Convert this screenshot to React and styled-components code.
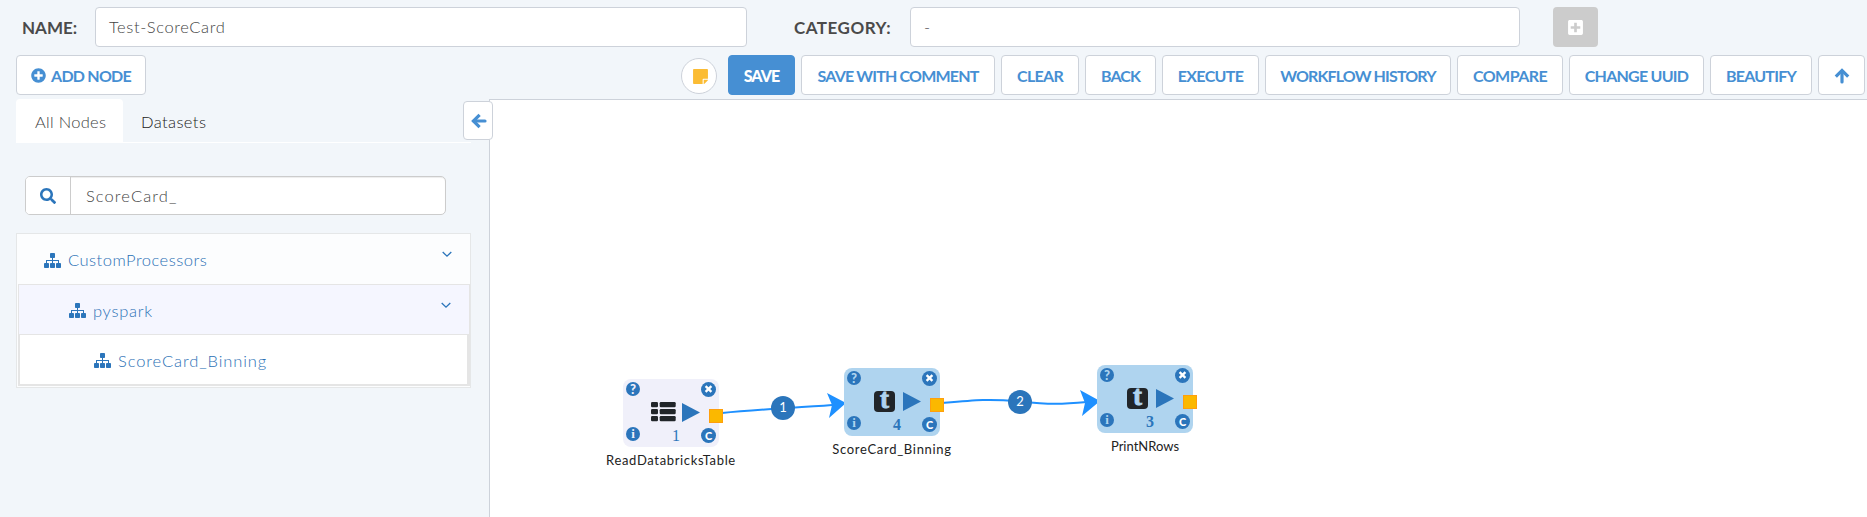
import React from 'react';
import styled, { createGlobalStyle } from 'styled-components';
import { FaPlusCircle, FaPlusSquare, FaSearch, FaStickyNote } from 'react-icons/fa';

const Global = createGlobalStyle`
  * { box-sizing: border-box; }
  body { margin: 0; font-family: Lato, "Liberation Sans", sans-serif; font-size: 16.5px; font-weight: 300; }
  svg { display: block; flex: none; }
`;

const Page = styled.div`
  height: 517px;
  display: flex;
  flex-direction: column;
  overflow: hidden;
  background: #f2f6fa;
`;
const FormRow = styled.div`
  display: flex;
  align-items: center;
  padding: 7px 0 0 22px;
`;
const Label = styled.label`
  width: ${(p) => p.$w}px;
  flex: none;
  color: #4a4a4a;
  font-size: 17px;
  font-weight: 700;
  letter-spacing: ${(p) => p.$ls || 0}px;
  white-space: nowrap;
`;
const Field = styled.div`
  width: ${(p) => p.$w}px;
  height: 40px;
  flex: none;
  display: flex;
  align-items: center;
  padding: 0 14px 1px 13px;
  margin-right: ${(p) => p.$gap}px;
  border: 1px solid #cdd2da;
  border-radius: 4px;
  background: #fff;
  color: #444;
  letter-spacing: ${(p) => p.$ls || 0}px;
`;
const AddCategory = styled.button`
  width: 45px;
  height: 40px;
  padding: 0;
  display: flex;
  align-items: center;
  justify-content: center;
  border: 0;
  border-radius: 4px;
  background: #ccc;
  color: #fff;
`;
const Toolbar = styled.div`
  height: 52px;
  display: flex;
  align-items: flex-start;
  gap: 6px;
  padding: 8px 2px 0 16px;
`;
const Spacer = styled.div`
  flex: 1;
`;
const Button = styled.button`
  width: ${(p) => p.$w}px;
  height: 40px;
  flex: none;
  display: flex;
  align-items: center;
  justify-content: center;
  gap: 5px;
  padding: 1px 0 0;
  border: 1px solid ${(p) => (p.$primary ? '#468fd3' : '#cdd2da')};
  border-radius: 4px;
  background: ${(p) => (p.$primary ? '#468fd3' : '#fff')};
  color: ${(p) => (p.$primary ? '#fff' : '#468fd3')};
  font: ${(p) => (p.$primary ? 900 : 700)} 16px Lato, "Liberation Sans", sans-serif;
  letter-spacing: ${(p) => p.$ls || 0}px;
  white-space: nowrap;
`;
const NoteButton = styled.button`
  width: 36px;
  height: 36px;
  flex: none;
  display: flex;
  align-items: center;
  justify-content: center;
  margin: 3px 5px 0 0;
  padding: 0 0 0 2px;
  border: 1px solid #cdd2da;
  border-radius: 50%;
  background: #fff;
  color: #fbbc34;
`;
const Body = styled.div`
  flex: 1;
  display: flex;
  min-height: 0;
`;
const Sidebar = styled.aside`
  position: relative;
  width: 489px;
  flex: none;
  padding-left: 16px;
`;
const Tabs = styled.div`
  width: 455px;
  height: 44px;
  display: flex;
  border-bottom: 1px solid #fff;
`;
const Tab = styled.div`
  width: ${(p) => p.$w}px;
  display: flex;
  align-items: center;
  padding: 2px 0 0 ${(p) => p.$pl}px;
  border-radius: 4px 4px 0 0;
  background: ${(p) => (p.$active ? '#fff' : 'transparent')};
  color: ${(p) => (p.$active ? '#444' : '#222')};
  letter-spacing: ${(p) => p.$ls || 0}px;
`;
const Collapse = styled.button`
  position: absolute;
  top: 2px;
  left: 463px;
  width: 30px;
  height: 39px;
  display: flex;
  align-items: center;
  justify-content: center;
  padding: 0 0 0 1px;
  border: 1px solid #cdd2da;
  border-radius: 4px;
  background: #fff;
  color: #468fd3;
  z-index: 1;
`;
const Search = styled.div`
  display: flex;
  width: 421px;
  height: 39px;
  margin: 33px 0 18px 9px;
  border: 1px solid #ccc;
  border-radius: 5px;
  background: #fff;
  box-shadow: inset 0 1px 1px rgba(0, 0, 0, 0.075);
  color: #444;
`;
const SearchIcon = styled.div`
  width: 45px;
  display: flex;
  align-items: center;
  justify-content: center;
  border-right: 1px solid #ccc;
  border-radius: 4px 0 0 4px;
  background: #fff;
  color: #2b75bb;
`;
const SearchText = styled.div`
  display: flex;
  align-items: center;
  padding: 0 0 0 15px;
  letter-spacing: ${(p) => p.$ls || 0}px;
`;
const Tree = styled.div`
  width: 455px;
  border: 1px solid #e5e7e8;
  background: #fcfdfe;
`;
const Branch = styled.div`
  margin: ${(p) => (p.$leaf ? '0' : '0 0 1px 1px')};
  border: 1px solid #e5e5e5;
  border-right-width: ${(p) => (p.$leaf ? 2 : 1)}px;
  border-bottom-width: ${(p) => (p.$leaf ? 2 : 0)}px;
  background: ${(p) => (p.$leaf ? '#fff' : '#f5f6ff')};
`;
const TreeRow = styled.div`
  height: ${(p) => p.$h || 49}px;
  display: flex;
  align-items: center;
  gap: 7px;
  padding: 2px 18px 0 ${(p) => p.$indent}px;
  color: #2b70b5;
  letter-spacing: ${(p) => p.$ls || 0}px;
`;
const Caret = styled.span`
  margin: -11px 0 0 auto;
`;
const Canvas = styled.main`
  position: relative;
  flex: 1;
  border-top: 1px solid #cdd2da;
  border-left: 1px solid #cdd2da;
  background: #fff;
`;
const Links = styled.svg`
  position: absolute;
  top: 0;
  left: 0;
`;
const Node = styled.div`
  position: absolute;
  left: ${(p) => p.$x - 490}px;
  top: ${(p) => p.$y - 100}px;
  width: 96px;
  height: 68px;
  border-radius: 8px;
  background: ${(p) => (p.$plain ? '#f0f0fa' : '#afd4ef')};
  color: #2b75bb;
`;
const Part = styled.div`
  position: absolute;
  left: ${(p) => p.$x}px;
  top: ${(p) => p.$y}px;
`;
const RoundBadge = styled.div`
  position: absolute;
  left: ${(p) => p.$x}px;
  top: ${(p) => p.$y}px;
  width: ${(p) => p.$size}px;
  height: ${(p) => p.$size}px;
  border-radius: 50%;
  background: #2b75bb;
  color: ${(p) => p.$ink || '#fff'};
  font: 900 ${(p) => p.$fs || 12}px/${(p) => p.$size}px ${(p) => p.$font || 'Lato'}, sans-serif;
  text-align: center;
`;
const Count = styled.div`
  position: absolute;
  left: 43px;
  width: 20px;
  top: 47px;
  text-align: center;
  font: ${(p) => (p.$plain ? 400 : 700)} 16px/20px "Liberation Serif", serif;
`;
const Port = styled.div`
  position: absolute;
  left: 86px;
  top: 30px;
  width: 14px;
  height: 14px;
  border: 1px solid #ff9f0d;
  background: #fbb800;
`;
const Caption = styled.div`
  position: absolute;
  top: 72px;
  left: -30px;
  width: 156px;
  text-align: center;
  color: #222;
  font-size: 13px;
  font-weight: 400;
  line-height: 18px;
  letter-spacing: ${(p) => p.$ls || 0}px;
`;
const LinkBadge = styled.div`
  position: absolute;
  left: ${(p) => p.$x - 490}px;
  top: ${(p) => p.$y - 100}px;
  width: 24px;
  height: 24px;
  border-radius: 50%;
  background: #2b75bb;
  color: #fff;
  font-size: 13px;
  font-weight: 400;
  line-height: 23px;
  text-align: center;
`;

const Sitemap = () => (
  <svg width="17" height="15" viewBox="0 0 17 15" fill="#2b75bb">
    <rect x="6" y="0" width="5" height="5" rx="0.8" />
    <path d="M8 4h1v6H8zM2 7h13v1H2zM2 7h1v3H2zM14 7h1v3h-1z" />
    <rect x="0" y="10" width="5" height="5" rx="0.8" />
    <rect x="6" y="10" width="5" height="5" rx="0.8" />
    <rect x="12" y="10" width="5" height="5" rx="0.8" />
  </svg>
);
const Chevron = () => (
  <Caret>
    <svg width="10" height="7" viewBox="0 0 10 7" fill="none" stroke="#2b75bb" strokeWidth="1.3">
      <path d="M.7 1 5 5.2 9.3 1" />
    </svg>
  </Caret>
);
const Arrow = ({ up }) => (
  <svg width="16" height="16" viewBox="0 0 16 16" fill="none" stroke="currentColor" strokeWidth="3.2">
    <g transform={up ? 'rotate(90 8 8)' : undefined}>
      <path d="M8.6 1.8 2.4 8l6.2 6.2" />
      <path d="M3 8h11" strokeLinecap="round" />
    </g>
  </svg>
);
const ListIcon = () => (
  <svg width="25" height="20" viewBox="0 0 25 20" fill="#212529">
    {[0, 7, 14].map((y) => (
      <g key={y}>
        <rect x="0" y={y} width="7" height="5.2" rx="1.2" />
        <rect x="8.7" y={y} width="16" height="5.2" rx="1.2" />
      </g>
    ))}
  </svg>
);
const LetterTile = styled.div`
  width: 21px;
  height: 21px;
  border-radius: 4px;
  background: #212529;
  color: #afd4ef;
  font: 700 27px/17px "Liberation Serif", serif;
  -webkit-text-stroke: 0.9px #afd4ef;
  text-align: center;
`;

const actions = [
  ['SAVE WITH COMMENT', 194, -0.82], ['CLEAR', 78, -0.7], ['BACK', 71, -0.95], ['EXECUTE', 97, -0.65],
  ['WORKFLOW HISTORY', 186, -0.85], ['COMPARE', 106, -0.57], ['CHANGE UUID', 135, -0.75], ['BEAUTIFY', 102, -0.75],
];

function FlowNode({ x, y, name, count, plain, ls }) {
  const face = plain ? '#f0f0fa' : '#afd4ef';
  return (
    <Node $x={x} $y={y} $plain={plain}>
      <RoundBadge $x={3} $y={3} $size={14} $ink={face} $fs={13}>?</RoundBadge>
      <RoundBadge $x={78} $y={3} $size={15}>
        <svg width="15" height="15" viewBox="0 0 15 15" stroke="#fff" strokeWidth="2.3">
          <path d="M4.6 4.1 10.4 9.9M10.4 4.1 4.6 9.9" />
        </svg>
      </RoundBadge>
      <RoundBadge $x={3} $y={48} $size={14} $ink={face} $fs={13} $font={'"Liberation Serif"'}>i</RoundBadge>
      <RoundBadge $x={78} $y={49} $size={15} $fs={11}>C</RoundBadge>
      <Part $x={plain ? 28 : 30} $y={plain ? 23 : 23}>
        {plain ? <ListIcon /> : <LetterTile>t</LetterTile>}
      </Part>
      <Part $x={59} $y={24}>
        <svg width="18" height="19" viewBox="0 0 18 19"><path d="M0 0 18 9.5 0 19z" fill="#2b75bb" /></svg>
      </Part>
      <Count $plain={plain}>{count}</Count>
      <Port />
      <Caption $ls={ls}>{name}</Caption>
    </Node>
  );
}

export default function App() {
  return (
    <Page>
      <Global />
      <FormRow>
        <Label $w={73}>NAME:</Label>
        <Field $w={652} $gap={47} $ls={0.6}>Test-ScoreCard</Field>
        <Label $w={116} $ls={0.5}>CATEGORY:</Label>
        <Field $w={610} $gap={33}>-</Field>
        <AddCategory><FaPlusSquare size={17} /></AddCategory>
      </FormRow>
      <Toolbar>
        <Button $w={130} $ls={-0.75}><FaPlusCircle size={15} />ADD NODE</Button>
        <Spacer />
        <NoteButton><FaStickyNote size={17} /></NoteButton>
        <Button $w={67} $primary $ls={-0.9}>SAVE</Button>
        {actions.map(([t, w, ls]) => <Button key={t} $w={w} $ls={ls}>{t}</Button>)}
        <Button $w={47}><Arrow up /></Button>
      </Toolbar>
      <Body>
        <Sidebar>
          <Tabs>
            <Tab $w={107} $pl={19} $active $ls={0.3}>All Nodes</Tab>
            <Tab $w={103} $pl={18} $ls={0.4}>Datasets</Tab>
          </Tabs>
          <Collapse><Arrow /></Collapse>
          <Search>
            <SearchIcon><FaSearch size={16} /></SearchIcon>
            <SearchText $ls={1.1}>ScoreCard_</SearchText>
          </Search>
          <Tree>
            <TreeRow $h={50} $indent={27} $ls={0.5}><Sitemap />CustomProcessors<Chevron /></TreeRow>
            <Branch>
              <TreeRow $indent={50} $ls={0.7}><Sitemap />pyspark<Chevron /></TreeRow>
              <Branch $leaf>
                <TreeRow $indent={74} $ls={0.9}><Sitemap />ScoreCard_Binning</TreeRow>
              </Branch>
            </Branch>
          </Tree>
        </Sidebar>
        <Canvas>
          <Links width="1377" height="417" viewBox="490 100 1377 417" fill="none" stroke="#1e90ff" strokeWidth="2">
            <path d="M722 413C760 409 795 408 832 405" />
            <path d="M943 403C975 400 990 398.500 1020 401.500S1060 404.500 1087 402" />
            <path d="M827 393 846 403 829 418 832 405z" fill="#1e90ff" stroke="none" />
            <path d="M1080 390 1100 401 1082 416 1085 403z" fill="#1e90ff" stroke="none" />
          </Links>
          <FlowNode x={623} y={379} name="ReadDatabricksTable" count={1} plain ls={0.65} />
          <FlowNode x={844} y={368} name="ScoreCard_Binning" count={4} ls={0.7} />
          <FlowNode x={1097} y={365} name="PrintNRows" count={3} />
          <LinkBadge $x={771} $y={396}>1</LinkBadge>
          <LinkBadge $x={1008} $y={390}>2</LinkBadge>
        </Canvas>
      </Body>
    </Page>
  );
}
